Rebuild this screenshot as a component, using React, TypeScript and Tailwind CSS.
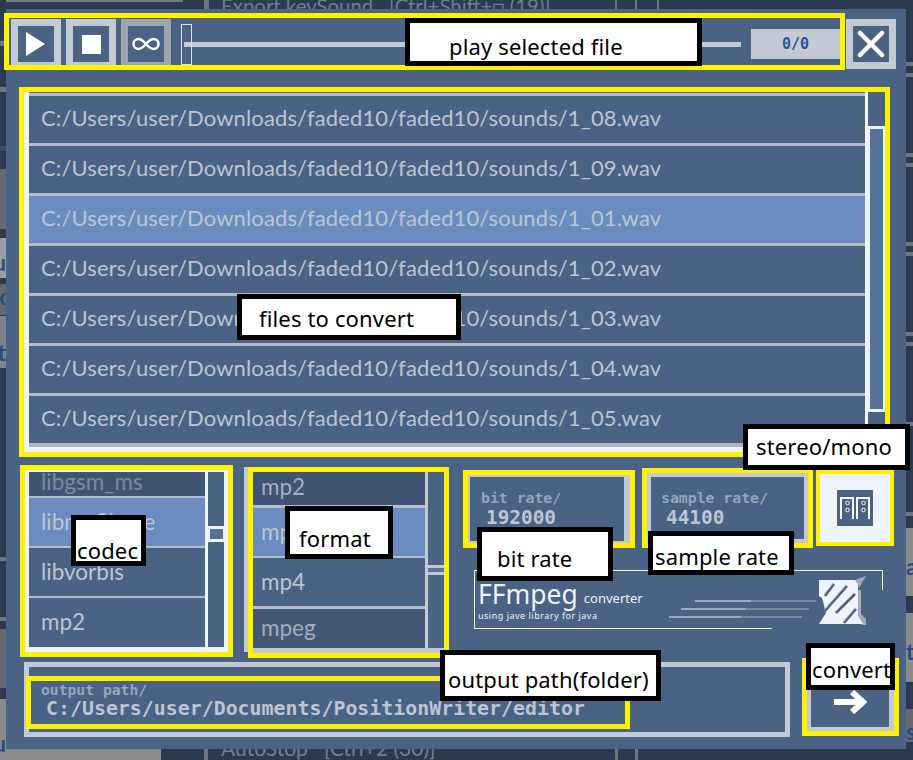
import { Infinity as InfinityIcon } from "lucide-react";

const fileRows = [
  { path: "C:/Users/user/Downloads/faded10/faded10/sounds/1_08.wav" },
  { path: "C:/Users/user/Downloads/faded10/faded10/sounds/1_09.wav" },
  { path: "C:/Users/user/Downloads/faded10/faded10/sounds/1_01.wav", active: true },
  { path: "C:/Users/user/Downloads/faded10/faded10/sounds/1_02.wav" },
  { path: "C:/Users/user/Downloads/faded10/faded10/sounds/1_03.wav" },
  { path: "C:/Users/user/Downloads/faded10/faded10/sounds/1_04.wav" },
  { path: "C:/Users/user/Downloads/faded10/faded10/sounds/1_05.wav" },
];

const Label = ({ text, className }: { text: string; className: string }) => (
  <div
    className={`absolute flex border-[5px] border-black bg-white font-['Noto_Sans',sans-serif] text-[22px] leading-none tracking-[0.15px] whitespace-pre text-black ${className}`}
  >
    {text}
  </div>
);

const IconButton = ({
  children,
  className,
}: {
  children: React.ReactNode;
  className: string;
}) => (
  <div className={`flex items-center justify-center ${className}`}>
    {children}
  </div>
);

const SmallRow = ({
  text,
  className,
  textClass = "text-[#bcc5d2]",
}: {
  text: string;
  className: string;
  textClass?: string;
}) => (
  <div
    className={`flex shrink-0 items-center font-[Lato,sans-serif] text-[22.5px] leading-none ${textClass} ${className}`}
  >
    {text}
  </div>
);

// letters of the window behind, cut off by the panel
const EdgeLetter = ({ text, className }: { text: string; className: string }) => (
  <div
    className={`flex font-[Lato,sans-serif] text-[22px] leading-none font-bold whitespace-pre text-[#2a4a7f] ${className}`}
  >
    {text}
  </div>
);

const App = () => {
  return (
    <div className="relative flex h-[760px] w-[913px] overflow-hidden bg-[#2c3a50]">
      {/* left edge of the window behind */}
      <div className="flex w-[6px] shrink-0 flex-col">
        <div className="mt-[41px] h-[5px] bg-[#6f7680]" />
        <div className="mt-[41px] h-[5px] bg-[#6f7680]" />
        <div className="mt-[54px] h-[5px] bg-[#3d4b60]" />
        <div className="mt-[18px] h-[60px] bg-[#666a70]" />
        <EdgeLetter text="u" className="mt-[9px] h-[40px] justify-end overflow-hidden bg-[#9a9ea5] pt-[14px]" />
        <EdgeLetter text="x" className="mt-[6px] h-[31px] justify-end overflow-hidden bg-[#666a70] pt-[2px]" />
        <EdgeLetter text="t" className="mt-[1px] h-[52px] justify-end overflow-hidden bg-[#808389] pt-[26px]" />
        <div className="mt-[189px] h-[4px] bg-[#6f7680]" />
        <div className="mt-[56px] h-[4px] bg-[#6f7680]" />
        <div className="mt-[8px] h-[59px] bg-[#666a70]" />
        <EdgeLetter text="u" className="mt-[11px] h-[61px] justify-end overflow-hidden bg-[#8a8b8d] pt-[34px]" />
      </div>

      <div className="flex w-[900px] shrink-0 flex-col">
        <div className="flex h-[9px] shrink-0 overflow-hidden">
          <div className="h-[2px] w-[177px] bg-[#777b80]" />
          <div className="ml-[21px] h-[9px] w-[5px] bg-[#6f7680]" />
          <div className="ml-[12px] w-[394px] -translate-y-[6px] font-[Lato,sans-serif] text-[20.4px] leading-[24px] whitespace-pre text-[#717e90]">
            Export keySound{"   "}[Ctrl+Shift+□ (19)]
          </div>
          <div className="h-[9px] w-[2px] bg-[#6f7680]" />
          <div className="ml-[18px] h-[9px] w-[2px] bg-[#6f7680]" />
          <div className="ml-[20px] h-[9px] w-[2px] bg-[#6f7680]" />
        </div>

        {/* converter panel */}
        <div className="flex h-[740px] shrink-0 flex-col bg-[#4a6283]">
          {/* player bar */}
          <div className="mt-[4px] flex h-[57px] shrink-0">
            <div className="-ml-[2px] flex h-[57px] w-[841px] shrink-0 items-start border-[5px] border-[#fff200] pt-[1px] pl-[2px]">
              <IconButton className="h-[46px] w-[50px] shrink-0 border-x-[7px] border-t-[7px] border-b-[3px] border-[#c3cad4]">
                <svg width="20" height="24" viewBox="0 0 20 24">
                  <polygon points="0,0 19,12 0,24" fill="#fff" />
                </svg>
              </IconButton>
              <IconButton className="ml-[5px] h-[46px] w-[50px] shrink-0 border-x-[7px] border-t-[7px] border-b-[3px] border-[#c3cad4]">
                <div className="h-[19px] w-[19px] bg-white" />
              </IconButton>
              <IconButton className="ml-[5px] h-[46px] w-[50px] shrink-0 border-x-[7px] border-t-[7px] border-b-[3px] border-[#9ea5af]">
                <InfinityIcon size={30} color="#ffffff" strokeWidth={2} />
              </IconButton>
              <div className="relative ml-[10px] flex h-[46px] w-[560px] shrink-0 items-center">
                <div className="mt-[5px] ml-[3px] h-[5px] flex-1 bg-[#c3cad4]" />
                <div className="absolute top-[5px] left-0 h-[41px] w-[11px] border border-[#dfe5ee]" />
              </div>
              <div className="mt-[10px] ml-[10px] flex h-[30px] w-[89px] shrink-0 items-center justify-center bg-[#c3cad4] font-['DejaVu_Sans_Mono',monospace] text-[15px] font-bold text-[#2a5298]">
                0/0
              </div>
            </div>
            <IconButton className="mt-[6px] ml-[1px] h-[50px] w-[50px] shrink-0 border-[7px] border-[#c3cad4]">
              <svg width="28" height="28" viewBox="0 0 28 28">
                <path
                  d="M3 3 L25 25 M25 3 L3 25"
                  stroke="#fff"
                  strokeWidth="4.5"
                  strokeLinecap="round"
                  fill="none"
                />
              </svg>
            </IconButton>
          </div>

          {/* file list */}
          <div className="mt-[17px] ml-[13px] h-[370px] w-[871px] shrink-0 border-[5px] border-[#fff200]">
            <div className="flex h-full border-b-[5px] border-l-[5px] border-[#f0f5fd]">
              <div className="flex w-[836px] shrink-0 flex-col border-b-[4px] border-[#aeb7c4] pt-[1px]">
                {fileRows.map((row) => (
                  <div
                    key={row.path}
                    className={`flex h-[50px] shrink-0 items-center border-t-[3px] border-[#b4bcc9] pb-[4px] pl-[12px] font-[Lato,sans-serif] text-[22px] tracking-[0.13px] text-[#bcc5d2] ${
                      row.active ? "bg-[#6a8cbf]" : ""
                    }`}
                  >
                    {row.path}
                  </div>
                ))}
              </div>
              <div className="w-[20px] shrink-0 border-l-[3px] border-[#f0f5fd]">
                <div className="mt-[34px] h-[286px] border-x-2 border-t-[3px] border-b-[3px] border-[#f0f5fd] bg-[#567299]" />
              </div>
            </div>
          </div>

          {/* codec, format and settings */}
          <div className="mt-[8px] flex h-[192px] shrink-0 items-start">
            <div className="ml-[14px] h-[192px] w-[213px] shrink-0 border-[5px] border-[#fff200]">
              <div className="flex h-full border-x-[4px] border-t-[2px] border-b-[5px] border-[#f0f5fd]">
                <div className="flex w-[176px] shrink-0 flex-col">
                  <SmallRow
                    text="libgsm_ms"
                    className="h-[24px] bg-[#3f5473] pb-[4px] pl-[12px]"
                    textClass="text-[#7c8a9e]"
                  />
                  <SmallRow
                    text="libmp3lame"
                    className="h-[50px] border-t-[2px] border-[#b4bcc9] bg-[#6a8cbf] pl-[12px]"
                  />
                  <SmallRow
                    text="libvorbis"
                    className="h-[50px] border-t-[2px] border-[#b4bcc9] pl-[12px]"
                  />
                  <SmallRow
                    text="mp2"
                    className="h-[50px] border-t-[2px] border-[#b4bcc9] pl-[12px]"
                  />
                </div>
                <div className="w-[20px] shrink-0 border-l-[3px] border-[#f0f5fd]">
                  <div className="mt-[54px] h-[16px] border-x-2 border-y-[3px] border-[#f0f5fd] bg-[#567299]" />
                </div>
              </div>
            </div>

            <div className="mt-[2px] ml-[11px] flex shrink-0">
              <div className="h-[185px] w-[4px] bg-[#c3cad4]" />
              <div className="h-[191px] w-[201px] border-[5px] border-[#fff200]">
                <div className="flex h-[181px] border-b-[5px] border-[#c3cad4]">
                  <div className="flex w-[172px] shrink-0 flex-col">
                    <SmallRow
                      text="mp2"
                      className="h-[33px] bg-[#3f5473] pb-[2px] pl-[8px]"
                      textClass="text-[#a4aebd]"
                    />
                    <SmallRow
                      text="mp3"
                      className="h-[51px] border-t-[3px] border-[#b4bcc9] bg-[#6a8cbf] pl-[8px]"
                    />
                    <SmallRow
                      text="mp4"
                      className="h-[50px] border-t-[2px] border-[#b4bcc9] pl-[8px]"
                    />
                    <SmallRow
                      text="mpeg"
                      className="h-[42px] border-t-[3px] border-[#b4bcc9] bg-[#435876] pl-[8px]"
                      textClass="text-[#a4aebd]"
                    />
                  </div>
                  <div className="w-[19px] shrink-0 border-l-[3px] border-[#c3cad4]">
                    <div className="mt-[93px] h-[10px] border-y-[3px] border-[#c3cad4] bg-[#567299]" />
                  </div>
                </div>
              </div>
            </div>

            <div className="mt-[3px] ml-[14px] flex shrink-0 flex-col">
              <div className="flex h-[80px] items-start">
                <div className="mt-[2px] h-[78px] w-[172px] shrink-0 border-[5px] border-[#fff200]">
                  <div className="h-full border-t-[2px] border-r-[6px] border-b-[2px] border-l-[2px] border-[#c3cad4] pt-[12px] pl-[11px] font-['DejaVu_Sans_Mono',monospace] font-bold">
                    <div className="text-[14.8px] leading-[17px] text-[#94a5be]">
                      bit rate/
                    </div>
                    <div className="ml-[5px] text-[19.4px] leading-[23px] text-[#bcc5d2]">
                      192000
                    </div>
                  </div>
                </div>
                <div className="ml-[7px] h-[80px] w-[171px] shrink-0 border-[5px] border-[#fff200]">
                  <div className="h-full border-[4px] border-[#c3cad4] pt-[12px] pl-[10px] font-['DejaVu_Sans_Mono',monospace] font-bold">
                    <div className="text-[14.8px] leading-[17px] text-[#94a5be]">
                      sample rate/
                    </div>
                    <div className="ml-[5px] text-[19.4px] leading-[23px] text-[#bcc5d2]">
                      44100
                    </div>
                  </div>
                </div>
                <div className="mt-[2px] ml-[3px] flex h-[76px] w-[78px] shrink-0 items-center justify-center border-[4px] border-[#fff200] bg-[#eef3fd]">
                  <svg width="36" height="36" viewBox="0 0 36 36">
                    <rect width="36" height="36" fill="#4a6283" />
                    <path
                      d="M4 29 V8 H16 V29 M20 29 V8 H32 V29"
                      stroke="#fff"
                      strokeWidth="2"
                      fill="none"
                    />
                    <circle cx="10.5" cy="13" r="1.8" stroke="#fff" strokeWidth="0.9" fill="none" />
                    <circle cx="10.5" cy="20" r="1.8" stroke="#fff" strokeWidth="0.9" fill="none" />
                    <circle cx="26.5" cy="13" r="1.8" stroke="#fff" strokeWidth="0.9" fill="none" />
                    <circle cx="26.5" cy="20" r="1.8" stroke="#fff" strokeWidth="0.9" fill="none" />
                  </svg>
                </div>
              </div>

              {/* ffmpeg frame */}
              <div className="relative mt-[22px] ml-[11px] flex h-[58px] w-[408px] border-t border-l border-[#eef3fd]">
                <div className="absolute -bottom-px -left-px h-px w-[298px] bg-[#eef3fd]" />
                <div className="absolute -top-px -right-px h-[20px] w-px bg-[#eef3fd]" />
                <div className="w-[194px] shrink-0 pl-[3px] font-['Noto_Sans',sans-serif] text-[#eef3fd]">
                  <div className="flex h-[36px] items-end leading-none whitespace-pre">
                    <span className="text-[26.5px]">FFmpeg</span>
                    <span className="mb-[2px] ml-[6px] text-[13px]">converter</span>
                  </div>
                  <div className="mt-[3px] text-[9px] leading-[12px] tracking-[0.5px] whitespace-pre">
                    using jave library for java
                  </div>
                </div>
                <svg className="mt-[29px] shrink-0" width="147" height="18" viewBox="0 0 147 18">
                  <path d="M26 1 H82" stroke="#eef3fd" />
                  <path d="M82 1 H147" stroke="#a8adb4" />
                  <path d="M12 9 H77" stroke="#eef3fd" />
                  <path d="M77 9 H140" stroke="#a8adb4" />
                  <path d="M0 17 H72" stroke="#eef3fd" />
                  <path d="M72 17 H133" stroke="#a8adb4" />
                </svg>
                <svg className="mt-[5px] ml-[3px] shrink-0" width="47" height="49" viewBox="0 0 47 49">
                  <path d="M39 14 H42 V38 L47 43 V49 H43 L39 44 Z" fill="#a8adb4" />
                  <path d="M36 4 L47 0 L40 12 L39 8 Z" fill="#a8adb4" />
                  <path d="M0 4 H36 L39 8 V40 L44 48 H0 L7 37 L3 22 L0 20 Z" fill="#eef3fd" />
                  <path d="M6 20 L15 8" stroke="#4a6283" strokeWidth="2.5" />
                  <path d="M5 19 L14 7" stroke="#a8adb4" strokeWidth="1" />
                  <path d="M6 35 L28 10" stroke="#4a6283" strokeWidth="2.5" />
                  <path d="M5 34 L27 9" stroke="#a8adb4" strokeWidth="1" />
                  <path d="M17 37 L36 18" stroke="#4a6283" strokeWidth="2.5" />
                  <path d="M16 36 L35 17" stroke="#a8adb4" strokeWidth="1" />
                  <path d="M25 47 L37 33" stroke="#4a6283" strokeWidth="2.5" />
                  <path d="M24 46 L36 32" stroke="#a8adb4" strokeWidth="1" />
                </svg>
              </div>
            </div>
          </div>

          {/* output path and convert */}
          <div className="mt-[5px] flex shrink-0 items-start">
            <div className="ml-[18px] h-[75px] w-[766px] shrink-0 border-[5px] border-[#c3cad4] pt-[9px]">
              <div className="-ml-[3px] h-[53px] w-[604px] border-[5px] border-[#fff200] pl-[10px] font-['DejaVu_Sans_Mono',monospace] font-bold">
                <div className="text-[14.7px] leading-[17px] text-[#94a5be]">
                  output path/
                </div>
                <div className="ml-[5px] text-[19.9px] leading-[22px] whitespace-pre text-[#bcc5d2]">
                  C:/Users/user/Documents/PositionWriter/editor
                </div>
              </div>
            </div>
            <div className="-mt-[4px] ml-[12px] h-[78px] w-[97px] shrink-0 border-[5px] border-[#fff200]">
              <IconButton className="h-full border-t-[4px] border-r-[5px] border-b-[4px] border-l-[4px] border-[#c3cad4] pt-[10px]">
                <svg width="33" height="24" viewBox="0 0 33 24">
                  <path d="M0 12 H29" stroke="#fff" strokeWidth="6" />
                  <path d="M18 2 L29 12 L18 22" stroke="#fff" strokeWidth="6" fill="none" />
                </svg>
              </IconButton>
            </div>
          </div>
        </div>

        <div className="flex h-[11px] shrink-0 overflow-hidden">
          <div className="h-[11px] w-[155px] bg-[#8a8b8d]" />
          <div className="ml-[43px] h-[11px] w-[4px] bg-[#6f7680]" />
          <div className="ml-[13px] w-[394px] -translate-y-[13px] font-[Lato,sans-serif] text-[21px] leading-[24px] whitespace-pre text-[#717e90]">
            AutoStop{"   "}[Ctrl+2 (30)]
          </div>
          <div className="h-[11px] w-[3px] bg-[#6f7680]" />
          <div className="ml-[17px] h-[11px] w-[3px] bg-[#6f7680]" />
        </div>
      </div>

      {/* right edge of the window behind */}
      <div className="flex w-[7px] shrink-0 flex-col">
        <div className="mt-[62px] h-[4px] bg-[#6f7680]" />
        <div className="mt-[7px] h-[4px] bg-[#6f7680]" />
        <div className="mt-[76px] h-[4px] bg-[#6f7680]" />
        <div className="mt-[6px] h-[4px] bg-[#6f7680]" />
        <div className="mt-[75px] h-[4px] bg-[#6f7680]" />
        <div className="mt-[6px] h-[4px] bg-[#6f7680]" />
        <div className="mt-[76px] h-[4px] bg-[#6f7680]" />
        <div className="mt-[6px] h-[4px] bg-[#6f7680]" />
        <div className="mt-[76px] h-[4px] bg-[#6f7680]" />
        <div className="mt-[86px] h-[4px] bg-[#6f7680]" />
        <EdgeLetter text="a" className="mt-[12px] h-[68px] overflow-hidden bg-[#8a8b8d] pt-[28px]" />
        <EdgeLetter text="t" className="mt-[17px] h-[69px] overflow-hidden bg-[#8a8b8d] pt-[28px]" />
        <EdgeLetter text="s" className="mt-[27px] h-[33px] overflow-hidden bg-[#666a70] pt-[12px]" />
      </div>

      {/* annotation labels drawn over the screenshot */}
      <Label text="play selected file" className="top-[18px] left-[405px] h-[48px] w-[297px] pt-[12px] pl-[39px]" />
      <Label text="files to convert" className="top-[294px] left-[237px] h-[46px] w-[224px] pt-[8px] pl-[17px]" />
      <Label text="codec" className="top-[515px] left-[71px] h-[51px] w-[75px] pt-[19px] pl-[1px]" />
      <Label text="format" className="top-[506px] left-[285px] h-[53px] w-[108px] pt-[16px] pl-[9px]" />
      <Label text="bit rate" className="top-[527px] left-[477px] h-[54px] w-[136px] pt-[15px] pl-[15px]" />
      <Label text="sample rate" className="top-[531px] left-[648px] h-[44px] w-[146px] pt-[9px] pl-[2px]" />
      <Label text="stereo/mono" className="top-[424px] left-[743px] h-[46px] w-[167px] pt-[6px] pl-[8px]" />
      <Label text="output path(folder)" className="top-[650px] left-[440px] h-[51px] w-[221px] pt-[13px] pl-[3px]" />
      <Label text="convert" className="top-[643px] left-[806px] h-[47px] w-[89px] pt-[10px] pl-[1px]" />
    </div>
  );
};

export default App;
